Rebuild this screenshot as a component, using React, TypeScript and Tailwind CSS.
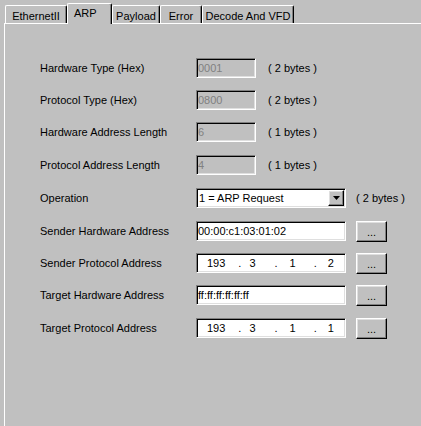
import React from 'react';

type Row =
  | { kind: 'fixed'; label: string; value: string; bytes: string; top: string }
  | { kind: 'select'; label: string; value: string; bytes: string; top: string }
  | { kind: 'text'; label: string; value: string; top: string }
  | { kind: 'ip'; label: string; parts: string[]; top: string };

const ROWS: Row[] = [
  { kind: 'fixed', label: 'Hardware Type (Hex)', value: '0001', bytes: '( 2 bytes )', top: 'mt-[34px]' },
  { kind: 'fixed', label: 'Protocol Type (Hex)', value: '0800', bytes: '( 2 bytes )', top: 'mt-[12px]' },
  { kind: 'fixed', label: 'Hardware Address Length', value: '6', bytes: '( 1 bytes )', top: 'mt-[12px]' },
  { kind: 'fixed', label: 'Protocol Address Length', value: '4', bytes: '( 1 bytes )', top: 'mt-[13px]' },
  { kind: 'select', label: 'Operation', value: '1 = ARP Request', bytes: '( 2 bytes )', top: 'mt-[13px]' },
  { kind: 'text', label: 'Sender Hardware Address', value: '00:00:c1:03:01:02', top: 'mt-[13px]' },
  { kind: 'ip', label: 'Sender Protocol Address', parts: ['193', '3', '1', '2'], top: 'mt-[12px]' },
  { kind: 'text', label: 'Target Hardware Address', value: 'ff:ff:ff:ff:ff:ff', top: 'mt-[12px]' },
  { kind: 'ip', label: 'Target Protocol Address', parts: ['193', '3', '1', '1'], top: 'mt-[13px]' },
];

const TABS = [
  { name: 'EthernetII', w: 'w-[62px]' },
  { name: 'ARP', w: 'w-[45px]' },
  { name: 'Payload', w: 'w-[48px]' },
  { name: 'Error', w: 'w-[42px]' },
  { name: 'Decode And VFD', w: 'w-[92px]' },
];

// classic 3D borders
const SUNKEN =
  'border border-t-[#808080] border-l-[#808080] border-b-white border-r-white shadow-[inset_1px_1px_0_#000,inset_-1px_-1px_0_#dfdfdf]';
const RAISED =
  'border border-t-white border-l-white border-b-black border-r-black shadow-[inset_-1px_-1px_0_#808080,inset_1px_1px_0_#dfdfdf]';

function DotsButton() {
  return (
    <button className={`ml-[10px] w-[31px] h-[21px] bg-[#c0c0c0] ${RAISED} flex items-end justify-center pb-[3px] leading-none`}>
      ...
    </button>
  );
}

function IpField({ parts }: { parts: string[] }) {
  return (
    <div className={`w-[150px] h-[20px] bg-white ${SUNKEN} flex items-center leading-none`}>
      <span className="ml-[10px]">{parts[0]}</span>
      <span className="ml-[13px]">.</span>
      <span className="ml-[8px]">{parts[1]}</span>
      <span className="ml-[19px]">.</span>
      <span className="ml-[12px]">{parts[2]}</span>
      <span className="ml-[18px]">.</span>
      <span className="ml-[11px]">{parts[3]}</span>
    </div>
  );
}

function Control({ row }: { row: Row }) {
  if (row.kind === 'fixed') {
    return (
      <>
        <div className={`w-[60px] h-[20px] bg-[#c0c0c0] ${SUNKEN} flex items-center pl-[1px] text-[#808080]`}>
          {row.value}
        </div>
        <span className="ml-[12px]">{row.bytes}</span>
      </>
    );
  }
  if (row.kind === 'select') {
    return (
      <>
        <div className={`w-[150px] h-[20px] bg-white ${SUNKEN} flex items-center justify-between pl-[2px] pr-[1px]`}>
          <span>{row.value}</span>
          <div className={`w-[16px] h-[16px] bg-[#c0c0c0] ${RAISED} flex items-center justify-center`}>
            <svg width="7" height="4" viewBox="0 0 7 4">
              <path d="M0 0h7L3.5 4z" fill="#000" />
            </svg>
          </div>
        </div>
        <span className="ml-[10px]">{row.bytes}</span>
      </>
    );
  }
  if (row.kind === 'text') {
    return (
      <>
        <div className={`w-[150px] h-[20px] bg-white ${SUNKEN} flex items-center pl-[1px]`}>{row.value}</div>
        <DotsButton />
      </>
    );
  }
  return (
    <>
      <IpField parts={row.parts} />
      <DotsButton />
    </>
  );
}

export default function App() {
  return (
    <div className="w-[421px] h-[426px] overflow-hidden bg-[#c0c0c0] pt-[3px] pl-[4px] flex flex-col text-[11px] text-black font-['Liberation_Sans',Arial,sans-serif]">
      <div className="relative z-10 -mb-px flex items-end h-[21px] pl-[1px]">
        {TABS.map((t) =>
          t.name === 'ARP' ? (
            <div
              key={t.name}
              className={`${t.w} h-[21px] bg-[#c0c0c0] border-t border-l border-white border-r border-r-black rounded-tl-[2px] rounded-tr-[2px] shadow-[inset_-1px_0_0_#808080] pl-[6px] pt-[4px] leading-none`}
            >
              {t.name}
            </div>
          ) : (
            <div
              key={t.name}
              className={`${t.w} h-[18px] mb-px bg-[#c0c0c0] border-t border-l border-white border-r border-r-black rounded-tl-[2px] rounded-tr-[2px] shadow-[inset_-1px_0_0_#808080] flex justify-center pt-[5px] leading-none whitespace-nowrap`}
            >
              {t.name}
            </div>
          ),
        )}
      </div>
      <div className="flex-1 border-t border-l border-white flex flex-col pl-[35px]">
        {ROWS.map((row) => (
          <div key={row.label} className={`${row.top} flex items-center h-[20px]`}>
            <span className="w-[156px] shrink-0">{row.label}</span>
            <Control row={row} />
          </div>
        ))}
      </div>
    </div>
  );
}
